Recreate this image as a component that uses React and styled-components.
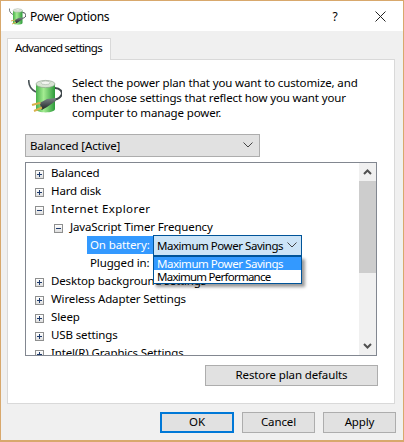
import React from 'react';
import styled, { createGlobalStyle } from 'styled-components';

const GlobalStyle = createGlobalStyle`
  html, body {
    margin: 0;
    padding: 0;
    background: #fff;
  }
  * {
    box-sizing: border-box;
  }
`;

const Window = styled.div`
  width: 404px;
  height: 442px;
  display: flex;
  flex-direction: column;
  border: 1px solid #d8a86c;
  border-bottom-width: 2px;
  background: #f0f0f0;
  font-family: "Noto Sans", "Open Sans", sans-serif;
  font-size: 11.5px;
  letter-spacing: -0.13px;
  color: #000;
  overflow: hidden;
`;

const TitleBar = styled.div`
  height: 30px;
  flex: none;
  display: flex;
  align-items: center;
  background: #fff;
  padding-left: 8px;
`;

const TitleText = styled.span`
  margin-left: 4px;
  font-size: 12px;
  letter-spacing: -0.3px;
  flex: 1;
`;

const HelpGlyph = styled.span`
  width: 12px;
  margin-right: 34px;
  font-size: 12px;
  text-align: center;
`;

const CloseGlyph = styled.svg`
  width: 11px;
  height: 11px;
  margin-right: 17px;
`;

const Body = styled.div`
  flex: 1;
  display: flex;
  flex-direction: column;
  padding: 7px 6px 0;
`;

const Tab = styled.div`
  width: 104px;
  height: 22px;
  margin-bottom: -1px;
  position: relative;
  z-index: 1;
  background: #fff;
  border: 1px solid #d9d9d9;
  border-bottom: none;
  padding-left: 7px;
  line-height: 18px;
  letter-spacing: -0.7px;
  white-space: nowrap;
`;

const Panel = styled.div`
  width: 388px;
  height: 345px;
  background: #fff;
  border: 1px solid #d9d9d9;
  padding: 0 16px 0 17px;
`;

const Intro = styled.div`
  display: flex;
  height: 74px;
  padding: 15px 0 0 3px;
`;

const IntroIcon = styled.div`
  width: 44px;
  flex: none;
  padding-top: 4px;
`;

const IntroText = styled.p`
  margin: 0;
  line-height: 15px;
  white-space: nowrap;
`;

const PlanSelect = styled.div`
  width: 235px;
  height: 23px;
  display: flex;
  align-items: center;
  justify-content: space-between;
  padding: 0 6px 1px 4px;
  background: #e1e1e1;
  border: 1px solid #adadad;
`;

const Tree = styled.div`
  position: relative;
  width: 352px;
  height: 194px;
  margin-top: 5px;
  display: flex;
  border: 1px solid #828790;
  overflow: hidden;
`;

const TreeList = styled.div`
  flex: 1;
`;

const Row = styled.div`
  height: 18px;
  display: flex;
  align-items: center;
  padding-left: ${props => props.$indent}px;
  letter-spacing: ${props => props.$track ?? -0.13}px;
  white-space: nowrap;
`;

const Expander = styled.span`
  position: relative;
  width: 9px;
  height: 9px;
  flex: none;
  margin-right: 7px;
  margin-top: 4px;
  border: 1px solid #8e8f8f;
  background: linear-gradient(#fff, #dfdfdf);

  &:before {
    content: '';
    position: absolute;
    left: 1px;
    top: 3px;
    width: 5px;
    height: 1px;
    background: #1d3a6c;
  }

  &:after {
    content: '';
    display: ${props => (props.$open ? 'none' : 'block')};
    position: absolute;
    left: 3px;
    top: 1px;
    width: 1px;
    height: 5px;
    background: #1d3a6c;
  }
`;

const SettingLabel = styled.span`
  width: 66px;
  height: 18px;
  flex: none;
  align-self: flex-start;
  margin-top: 1px;
  padding-left: 3px;
  line-height: 17px;
  background: ${props => (props.$active ? '#3399ff' : 'transparent')};
  color: ${props => (props.$active ? '#fff' : '#000')};
`;

const ValueSelect = styled.div`
  width: 149px;
  height: 21px;
  flex: none;
  align-self: flex-start;
  display: flex;
  align-items: center;
  justify-content: space-between;
  padding: 0 4px 1px 3px;
  background: #cce4f7;
  border: 1px solid #005499;
  letter-spacing: -0.46px;
  white-space: nowrap;
  position: relative;
  z-index: 2;
`;

const DropList = styled.div`
  position: absolute;
  left: 127px;
  top: 93px;
  z-index: 3;
  width: 149px;
  background: #fff;
  border: 1px solid #005499;
  box-shadow: 3px 3px 3px rgba(0, 0, 0, 0.4);
`;

const DropItem = styled.div`
  height: 13px;
  line-height: 13px;
  padding-left: 3px;
  letter-spacing: ${props => props.$track}px;
  white-space: nowrap;
  background: ${props => (props.$selected ? '#3399ff' : '#fff')};
  color: ${props => (props.$selected ? '#fff' : '#000')};
`;

const ScrollBar = styled.div`
  width: 17px;
  flex: none;
  display: flex;
  flex-direction: column;
  align-items: center;
  background: #f0f0f0;
`;

const ScrollArrow = styled.div`
  height: 18px;
  flex: none;
  display: flex;
  align-items: center;
  justify-content: center;
`;

const ScrollThumb = styled.div`
  width: 100%;
  height: 92px;
  flex: none;
  background: #cdcdcd;
`;

const ScrollRest = styled.div`
  flex: 1;
`;

const RestoreRow = styled.div`
  display: flex;
  justify-content: flex-end;
  margin-top: 9px;
`;

const Button = styled.button`
  width: ${props => props.$width}px;
  height: 21px;
  padding: 0 0 2px;
  font: inherit;
  letter-spacing: inherit;
  color: #000;
  background: #e1e1e1;
  border: ${props => (props.$primary ? '2px solid #0078d7' : '1px solid #adadad')};
`;

const ButtonBar = styled.div`
  flex: 1;
  display: flex;
  justify-content: flex-end;
  gap: 8px;
  padding: 8px 1px 0 0;
`;

const Chevron = ({ color = '#444' }) => (
  <svg width="10" height="6" viewBox="0 0 10 6">
    <path d="M0.5 0.5 L5 5 L9.5 0.5" fill="none" stroke={color} strokeWidth="1" />
  </svg>
);

const ScrollChevron = ({ up }) => (
  <svg width="9" height="6" viewBox="0 0 9 6">
    <path d={up ? 'M1 5 L4.5 1.5 L8 5' : 'M1 1 L4.5 4.5 L8 1'} fill="none" stroke="#505050" strokeWidth="2" />
  </svg>
);

const PowerIcon = ({ size }) => (
  <svg width={size} height={size} viewBox="0 0 34 34" style={{ display: 'block', flex: 'none' }}>
    <defs>
      <linearGradient id="cell" x1="0" x2="1" y1="0" y2="0">
        <stop offset="0" stopColor="#46b04a" />
        <stop offset="0.4" stopColor="#a4ec92" />
        <stop offset="1" stopColor="#2c9a3a" />
      </linearGradient>
      <linearGradient id="plug" x1="0" x2="0" y1="0" y2="1">
        <stop offset="0" stopColor="#7d8688" />
        <stop offset="1" stopColor="#1a1f21" />
      </linearGradient>
    </defs>
    <path d="M0.8 1 C0.5 6 2 10 8 13" fill="none" stroke="#4a5458" strokeWidth="1.6" />
    <path d="M8 5 V30 C8 34.5 27 34.5 27 30 V5 Z" fill="url(#cell)" />
    <ellipse cx="17.5" cy="5" rx="9.5" ry="3.6" fill="#d8e4d4" stroke="#8a9a8a" strokeWidth="0.6" />
    <ellipse cx="17.5" cy="3.8" rx="4.5" ry="1.8" fill="#f4f6f2" stroke="#9aa89a" strokeWidth="0.5" />
    <path d="M27 9 C32 9 35 13 33.5 16 C32 19 30 20 27 20.5" fill="none" stroke="#3d464a" strokeWidth="2" />
    <path d="M11.7 24 L19 20 L27.7 19 L28 21.7 L19 28 L13.7 31 Z" fill="url(#plug)" />
    <path d="M4 26 L12.5 23.8" stroke="#d9b04c" strokeWidth="2" />
    <path d="M6 32 L14 28.5" stroke="#d9b04c" strokeWidth="2" />
  </svg>
);

const App = () => (
  <>
    <GlobalStyle />
    <Window>
      <TitleBar>
        <PowerIcon size={17} />
        <TitleText>Power Options</TitleText>
        <HelpGlyph>?</HelpGlyph>
        <CloseGlyph viewBox="0 0 11 11">
          <path d="M0.5 0.5 L10.5 10.5 M10.5 0.5 L0.5 10.5" stroke="#222" strokeWidth="1" fill="none" />
        </CloseGlyph>
      </TitleBar>
      <Body>
        <Tab>Advanced settings</Tab>
        <Panel>
          <Intro>
            <IntroIcon>
              <PowerIcon size={34} />
            </IntroIcon>
            <IntroText>
              Select the power plan that you want to customize, and
              <br />
              then choose settings that reflect how you want your
              <br />
              computer to manage power.
            </IntroText>
          </Intro>
          <PlanSelect>
            Balanced [Active]
            <Chevron />
          </PlanSelect>
          <Tree>
            <TreeList>
              <Row $indent={9}><Expander />Balanced</Row>
              <Row $indent={9}><Expander />Hard disk</Row>
              <Row $indent={9} $track={0.42}><Expander $open />Internet Explorer</Row>
              <Row $indent={28}><Expander $open />JavaScript Timer Frequency</Row>
              <Row $indent={61}>
                <SettingLabel $active>On battery:</SettingLabel>
                <ValueSelect>
                  Maximum Power Savings
                  <Chevron />
                </ValueSelect>
              </Row>
              <Row $indent={61}><SettingLabel>Plugged in:</SettingLabel></Row>
              <Row $indent={9}><Expander />Desktop background settings</Row>
              <Row $indent={9}><Expander />Wireless Adapter Settings</Row>
              <Row $indent={9}><Expander />Sleep</Row>
              <Row $indent={9}><Expander />USB settings</Row>
              <Row $indent={9}><Expander />Intel(R) Graphics Settings</Row>
            </TreeList>
            <ScrollBar>
              <ScrollArrow><ScrollChevron up /></ScrollArrow>
              <ScrollThumb />
              <ScrollRest />
              <ScrollArrow><ScrollChevron /></ScrollArrow>
            </ScrollBar>
            <DropList>
              <DropItem $selected $track={-0.46}>Maximum Power Savings</DropItem>
              <DropItem $track={-0.75}>Maximum Performance</DropItem>
            </DropList>
          </Tree>
          <RestoreRow>
            <Button $width={173}>Restore plan defaults</Button>
          </RestoreRow>
        </Panel>
        <ButtonBar>
          <Button $width={74} $primary>OK</Button>
          <Button $width={73}>Cancel</Button>
          <Button $width={73}>Apply</Button>
        </ButtonBar>
      </Body>
    </Window>
  </>
);

export default App;
